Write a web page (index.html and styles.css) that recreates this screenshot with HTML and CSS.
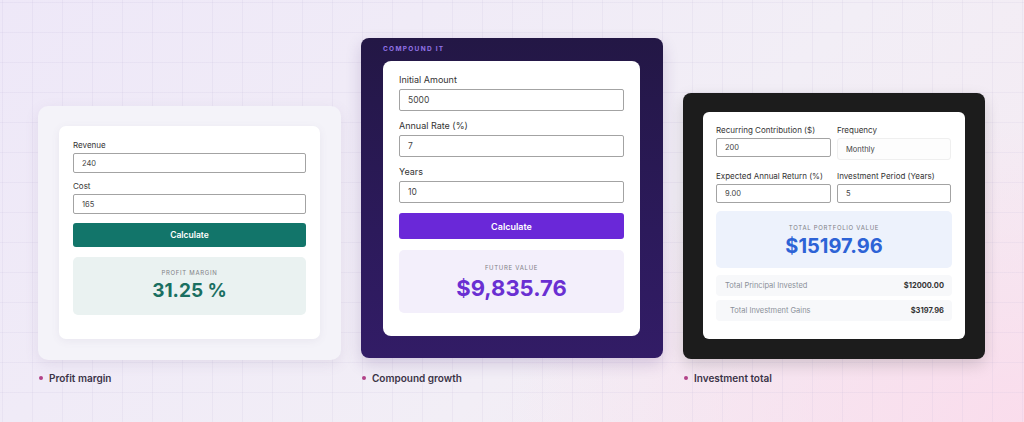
FILE: index.html
```html
<!DOCTYPE html>
<html lang="en">

<head>
  <meta charset="UTF-8">
  <meta name="viewport" content="width=device-width, initial-scale=1.0">
  <title>Calculator Widgets</title>
  <link rel="stylesheet" href="styles.css">
</head>

<body>
  <div class="showcase">
    <!-- Profit margin -->
    <div class="item item-profit">
      <div class="frame frame-light">
        <div class="panel panel-profit">
          <label class="field-label">Revenue</label>
          <input class="field" type="text" value="240">
          <label class="field-label">Cost</label>
          <input class="field" type="text" value="165">
          <button class="btn btn-teal">Calculate</button>
          <div class="result result-teal">
            <div class="result-label">Profit margin</div>
            <div class="result-value">31.25 %</div>
          </div>
        </div>
      </div>
      <div class="caption"><span class="dot"></span>Profit margin</div>
    </div>

    <!-- Compound growth -->
    <div class="item item-compound">
      <div class="frame frame-purple">
        <div class="brand">Compound it</div>
        <div class="panel panel-compound">
          <label class="field-label">Initial Amount</label>
          <input class="field" type="text" value="5000">
          <label class="field-label">Annual Rate (%)</label>
          <input class="field" type="text" value="7">
          <label class="field-label">Years</label>
          <input class="field" type="text" value="10">
          <button class="btn btn-purple">Calculate</button>
          <div class="result result-purple">
            <div class="result-label">Future value</div>
            <div class="result-value">$9,835.76</div>
          </div>
        </div>
      </div>
      <div class="caption"><span class="dot"></span>Compound growth</div>
    </div>

    <!-- Investment total -->
    <div class="item item-invest">
      <div class="frame frame-dark">
        <div class="panel panel-invest">
          <div class="grid">
            <div>
              <label class="field-label">Recurring Contribution ($)</label>
              <input class="field" type="text" value="200">
            </div>
            <div>
              <label class="field-label">Frequency</label>
              <div class="select">Monthly</div>
            </div>
            <div>
              <label class="field-label">Expected Annual Return (%)</label>
              <input class="field" type="text" value="9.00">
            </div>
            <div>
              <label class="field-label">Investment Period (Years)</label>
              <input class="field" type="text" value="5">
            </div>
          </div>
          <div class="result result-blue">
            <div class="result-label">Total portfolio value</div>
            <div class="result-value">$15197.96</div>
          </div>
          <div class="row">
            <span>Total Principal Invested</span>
            <strong>$12000.00</strong>
          </div>
          <div class="row row-gains">
            <span>Total Investment Gains</span>
            <strong>$3197.96</strong>
          </div>
        </div>
      </div>
      <div class="caption"><span class="dot"></span>Investment total</div>
    </div>
  </div>
</body>

</html>
```

FILE: styles.css
```css
html,
body {
  margin: 0;
  padding: 0;
}

body {
  width: 1024px;
  height: 422px;
  overflow: hidden;
  font-family: Inter, "Noto Sans", Arial, sans-serif;
  background-color: #efeaf6;
  background-image:
    linear-gradient(to right, rgba(190, 178, 214, 0.14) 1px, transparent 1px),
    linear-gradient(to bottom, rgba(190, 178, 214, 0.14) 1px, transparent 1px),
    radial-gradient(ellipse 520px 300px at 100% 100%, rgba(250, 220, 236, 0.95), rgba(250, 220, 236, 0)),
    linear-gradient(135deg, #eee8f8 0%, #f2eef6 60%, #f5eaf2 100%);
  background-size: 30px 30px, 30px 30px, 100% 100%, 100% 100%;
  background-position: 2px 2px, 2px 2px, 0 0, 0 0;
}

.showcase {
  display: flex;
  align-items: flex-end;
  gap: 20px;
  padding: 38px 0 0 38px;
}

.item-profit {
  width: 303px;
}

.item-compound,
.item-invest {
  width: 302px;
}

/* --- frames --- */
.frame {
  box-sizing: border-box;
  border-radius: 8px;
  display: flex;
  flex-direction: column;
}

.frame-light {
  height: 254px;
  padding: 20px 21px 21px;
  background: #f4f3f9;
  border-radius: 10px;
  box-shadow: 0 4px 14px rgba(120, 100, 150, 0.12);
}

.frame-purple {
  height: 320px;
  padding: 6px 23px 22px 22px;
  background: linear-gradient(180deg, #231745 0%, #2c1a5b 60%, #321c66 100%);
  box-shadow: 0 6px 16px rgba(60, 30, 110, 0.18);
}

.frame-dark {
  height: 266px;
  padding: 19px 20px 20px;
  background: #1c1c1c;
  box-shadow: 0 6px 16px rgba(0, 0, 0, 0.15);
}

.brand {
  height: 10px;
  line-height: 10px;
  margin-bottom: 7px;
  font-size: 6.5px;
  font-weight: 700;
  letter-spacing: 1.3px;
  text-transform: uppercase;
  color: #9273e6;
}

/* --- white panels --- */
.panel {
  box-sizing: border-box;
  flex: 1;
  background: #fff;
  border-radius: 7px;
  display: flex;
  flex-direction: column;
}

.panel-profit {
  padding: 14px 14px 0;
  box-shadow: 0 2px 8px rgba(100, 90, 130, 0.08);
}

.panel-compound {
  padding: 13px 16px 0;
  border-radius: 8px;
}

.panel-invest {
  padding: 13px 13px 0;
  border-radius: 6px;
}

.field-label {
  display: block;
  font-size: 8px;
  line-height: 10px;
  color: #333;
  margin-bottom: 3px;
}

.field {
  display: block;
  box-sizing: border-box;
  width: 100%;
  height: 20px;
  margin: 0 0 8px;
  padding: 0 8px;
  border: 1px solid #a3a3a3;
  border-radius: 2px;
  background: #fff;
  font-family: inherit;
  font-size: 7.5px;
  color: #444;
  outline: none;
}

.btn {
  display: block;
  width: 100%;
  border: 0;
  border-radius: 3px;
  color: #fff;
  font-family: inherit;
  font-weight: 600;
  cursor: pointer;
}

.btn-teal {
  height: 24px;
  margin-top: 1px;
  background: #12756a;
  font-size: 8.5px;
}

.btn-purple {
  height: 26px;
  margin-top: 1px;
  background: #6a28d8;
  font-size: 9px;
}

.result {
  text-align: center;
  border-radius: 5px;
}

.result-label {
  font-size: 6px;
  line-height: 8px;
  letter-spacing: 0.7px;
  text-transform: uppercase;
  color: #808086;
}

.result-value {
  font-weight: 700;
}

.result-teal {
  margin-top: 10px;
  height: 58px;
  box-sizing: border-box;
  padding-top: 12px;
  background: #eaf2f1;
}

.result-teal .result-value {
  margin-top: 4px;
  font-size: 19px;
  line-height: 20px;
  color: #1a6f61;
}

/* compound overrides */
.panel-compound .field-label {
  font-size: 9px;
  line-height: 11px;
  margin-bottom: 4px;
}

.panel-compound .field {
  height: 22px;
  margin-bottom: 9px;
  font-size: 8.5px;
}

.result-purple {
  margin-top: 11px;
  height: 63px;
  box-sizing: border-box;
  padding-top: 14px;
  background: #f3effb;
}

.result-purple .result-value {
  margin-top: 4px;
  font-size: 22px;
  line-height: 24px;
  color: #6a2fd2;
}

/* investment */
.grid {
  display: grid;
  grid-template-columns: 115px 114px;
  column-gap: 6px;
  row-gap: 11px;
}

.panel-invest .field {
  height: 19px;
  margin: 0;
}

.select {
  box-sizing: border-box;
  height: 22px;
  padding: 0 8px;
  border: 1px solid #efefef;
  border-radius: 3px;
  background: #fdfdfd;
  font-size: 7.5px;
  line-height: 22px;
  color: #444;
}

.result-blue {
  margin-top: 8px;
  height: 57px;
  box-sizing: border-box;
  padding-top: 13px;
  background: #edf2fc;
}

.result-blue .result-value {
  margin-top: 3px;
  font-size: 20px;
  line-height: 22px;
  color: #2d63d6;
}

.row {
  display: flex;
  justify-content: space-between;
  align-items: center;
  height: 21px;
  margin-top: 4px;
  padding: 0 8px 0 9px;
  border-radius: 4px;
  background: #f7f8fa;
  font-size: 7.5px;
}

.result-blue + .row {
  margin-top: 7px;
}

.row span {
  color: #8b9099;
}

.row strong {
  color: #333;
  font-weight: 700;
}

.row-gains {
  padding-left: 14px;
}

/* captions */
.caption {
  display: flex;
  align-items: center;
  margin-top: 14px;
  font-size: 10px;
  line-height: 12px;
  font-weight: 600;
  color: #3b3347;
}

.item-profit .caption {
  margin-top: 12px;
}

.item-invest .caption {
  margin-top: 13px;
}

.dot {
  width: 4px;
  height: 4px;
  margin: 0 6px 0 1px;
  border-radius: 50%;
  background: #b24288;
}
```
